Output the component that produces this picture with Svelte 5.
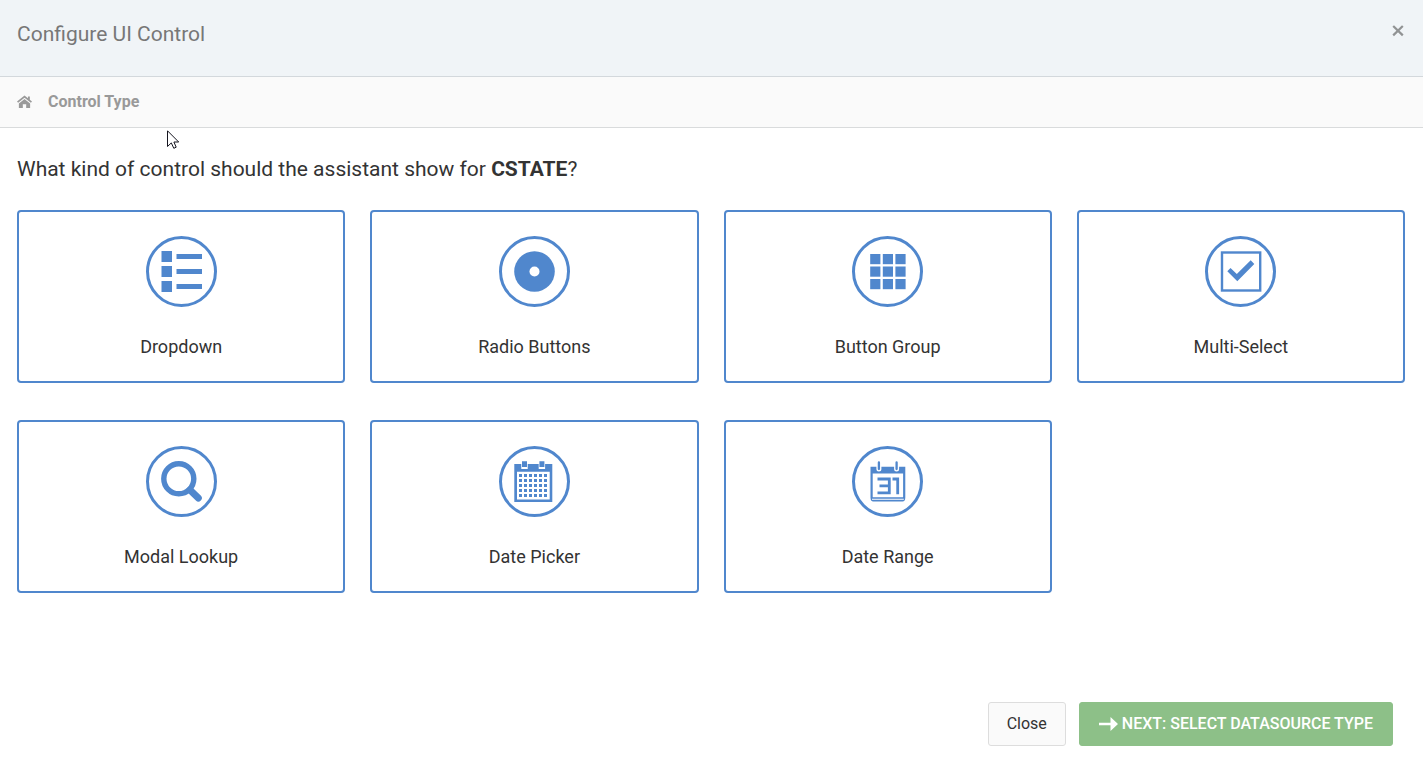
<script>
  const controls = [
    { id: 'dropdown', label: 'Dropdown' },
    { id: 'radio', label: 'Radio Buttons' },
    { id: 'group', label: 'Button Group' },
    { id: 'multi', label: 'Multi-Select' },
    { id: 'lookup', label: 'Modal Lookup' },
    { id: 'date', label: 'Date Picker' },
    { id: 'range', label: 'Date Range' }
  ];
  const three = [0, 1, 2];
  const rows = [0, 1, 2, 3, 4];
  const cols = [0, 1, 2, 3, 4, 5];
</script>

<div class="dialog">
  <header>
    <h1>Configure UI Control</h1>
    <button class="dismiss" aria-label="Dismiss">
      <svg width="12" height="12" viewBox="0 0 12 12"><path d="M1.2 1 10.8 10.400M10.8 1 1.2 10.400" stroke="#919394" stroke-width="2.2" /></svg>
    </button>
  </header>

  <nav>
    <svg width="15" height="14" viewBox="0 0 16 14" fill="#999">
      <path d="M8 0 0 6.500l1.200 1.400L8 2.400l6.800 5.500L16 6.500l-2.300-1.900V1.200h-2v1.800z" />
      <path d="M8 3.700 2 8.500V13.500h4.200V9.500h3.600v4H14V8.500z" />
    </svg>
    <span>Control Type</span>
  </nav>

  <main>
    <h2>What kind of control should the assistant show for <b>CSTATE</b>?</h2>
    <div class="grid">
      {#each controls as c}
        <button class="card">
          <svg width="71" height="71" viewBox="0 0 71 71" fill="#5087cd">
            <circle cx="35.5" cy="35.5" r="34" fill="none" stroke="#5087cd" stroke-width="3" />
            {#if c.id === 'dropdown'}
              {#each three as r}
                <rect x="15.5" y={15 + r * 15} width="10.5" height="11" />
                <rect x="30.5" y={18 + r * 15} width="25.5" height="5" />
              {/each}
            {:else if c.id === 'radio'}
              <circle cx="35.5" cy="35.5" r="20.3" />
              <circle cx="35.5" cy="35.5" r="5" fill="#fff" />
            {:else if c.id === 'group'}
              {#each three as r}
                {#each three as k}
                  <rect x={18.2 + k * 12.6} y={18 + r * 12.5} width="10.2" height="10.2" />
                {/each}
              {/each}
            {:else if c.id === 'multi'}
              <rect x="17" y="16.500" width="38.200" height="38" fill="none" stroke="#5087cd" stroke-width="2.4" />
              <path d="M22.3 35.3 25.5 32l6.300 6L45.7 24.3 49.3 28 32.3 45.3z" />
            {:else if c.id === 'lookup'}
              <circle cx="32.8" cy="32.8" r="15" fill="none" stroke="#5087cd" stroke-width="5.4" />
              <path d="M44 44 52.3 52" stroke="#5087cd" stroke-width="7" stroke-linecap="round" />
            {:else if c.id === 'date'}
              <path fill-rule="evenodd" d="M15.3 18H53.3V56H15.3zM18 25.7V53.4H50.7V25.7z" />
              <path fill="#fff" d="M22.3 17h6.4v6h-6.4zM39.7 17h6.4v6h-6.4z" />
              <path d="M23 15.3h5v5.700h-5zM40.4 15.3h5v5.700h-5z" />
              {#each rows as r}
                {#each cols as k}
                  <rect x={20 + k * 5} y={28 + r * 5} width="3" height="3" />
                {/each}
              {/each}
            {:else}
              <path fill-rule="evenodd" d="M18.5 20.7H53.3V51.5Q53.3 55.500 50.5 55.500H21.3Q18.5 55.500 18.5 51.5zM20.7 27.5V51.3H51.1V27.5zM20 52.7V53.7H51.8V52.7z" />
              <path stroke="#fff" stroke-width="5" stroke-linecap="round" d="M26.9 16V23M44.6 16V23" />
              <path stroke="#5087cd" stroke-width="2.3" stroke-linecap="round" d="M26.9 16.5V23M44.6 16.5V23" />
              <path fill="none" stroke="#5087cd" stroke-width="2.8" d="M25.5 33H37.300V46.8H25.5M27.5 39.900H37.300M40.5 33H45.7V48.2" />
            {/if}
          </svg>
          <span>{c.label}</span>
        </button>
      {/each}
    </div>
  </main>

  <footer>
    <button class="close">Close</button>
    <button class="next">
      <svg width="19" height="14" viewBox="0 0 19 14" fill="#fff"><path d="M0 5.7H11.5V0L19 7 11.5 14V8.3H0z" /></svg>
      <span>NEXT: SELECT DATASOURCE TYPE</span>
    </button>
  </footer>

  <svg class="pointer" width="13" height="20" viewBox="0 0 13 20">
    <path d="M.5.8V16.5L4.3 12.9 6.8 18.3 9.2 17.2 6.9 12H11.7z" fill="#fff" stroke="#15151f" stroke-width="1" />
  </svg>
</div>

<style>
  :global(body) { margin: 0; background: #fff; }
  .dialog {
    position: relative;
    display: flex;
    flex-direction: column;
    min-height: 100vh;
    box-sizing: border-box;
    font-family: Roboto, "Liberation Sans", sans-serif;
    color: #333;
  }
  button { font: inherit; cursor: pointer; }
  header {
    display: flex;
    justify-content: space-between;
    align-items: flex-start;
    padding: 20px 18px 28px 17px;
    background: #f0f4f7;
    border-bottom: 1px solid #d3d8dc;
  }
  h1, h2 { margin: 0; font-size: 21px; line-height: 28px; font-weight: 400; }
  h1 { color: #777; }
  .dismiss { display: flex; padding: 5px 1px; border: 0; background: none; }
  nav {
    display: flex;
    align-items: center;
    gap: 16px;
    padding: 13px 17px;
    background: #fafafa;
    border-bottom: 1px solid #d9dbdc;
    color: #999;
    font-size: 16px;
    line-height: 24px;
    font-weight: 700;
  }
  main { flex: 1; padding: 27px 18px 24px 17px; }
  .grid {
    display: grid;
    grid-template-columns: repeat(4, minmax(0, 1fr));
    gap: 37px 25px;
    margin-top: 27px;
  }
  .card {
    display: flex;
    flex-direction: column;
    align-items: center;
    gap: 26px;
    padding: 24px 8px 21px;
    border: 2px solid #5087cd;
    border-radius: 4px;
    background: #fff;
    color: #333;
    font-size: 18px;
    line-height: 27px;
  }
  footer {
    display: flex;
    justify-content: flex-end;
    gap: 13px;
    padding: 0 30px 13px;
    font-size: 16px;
    line-height: 24px;
  }
  .close, .next { padding: 9px 18px; border: 1px solid #ddd; border-radius: 3px; }
  .close { background: #fafafa; color: #333; }
  .next {
    display: flex;
    align-items: center;
    gap: 4px;
    padding: 9px 19px;
    border-color: #8dc088;
    background: #8dc088;
    color: #fff;
    font-weight: 500;
  }
  .pointer { position: absolute; left: 167px; top: 130px; pointer-events: none; }
</style>
